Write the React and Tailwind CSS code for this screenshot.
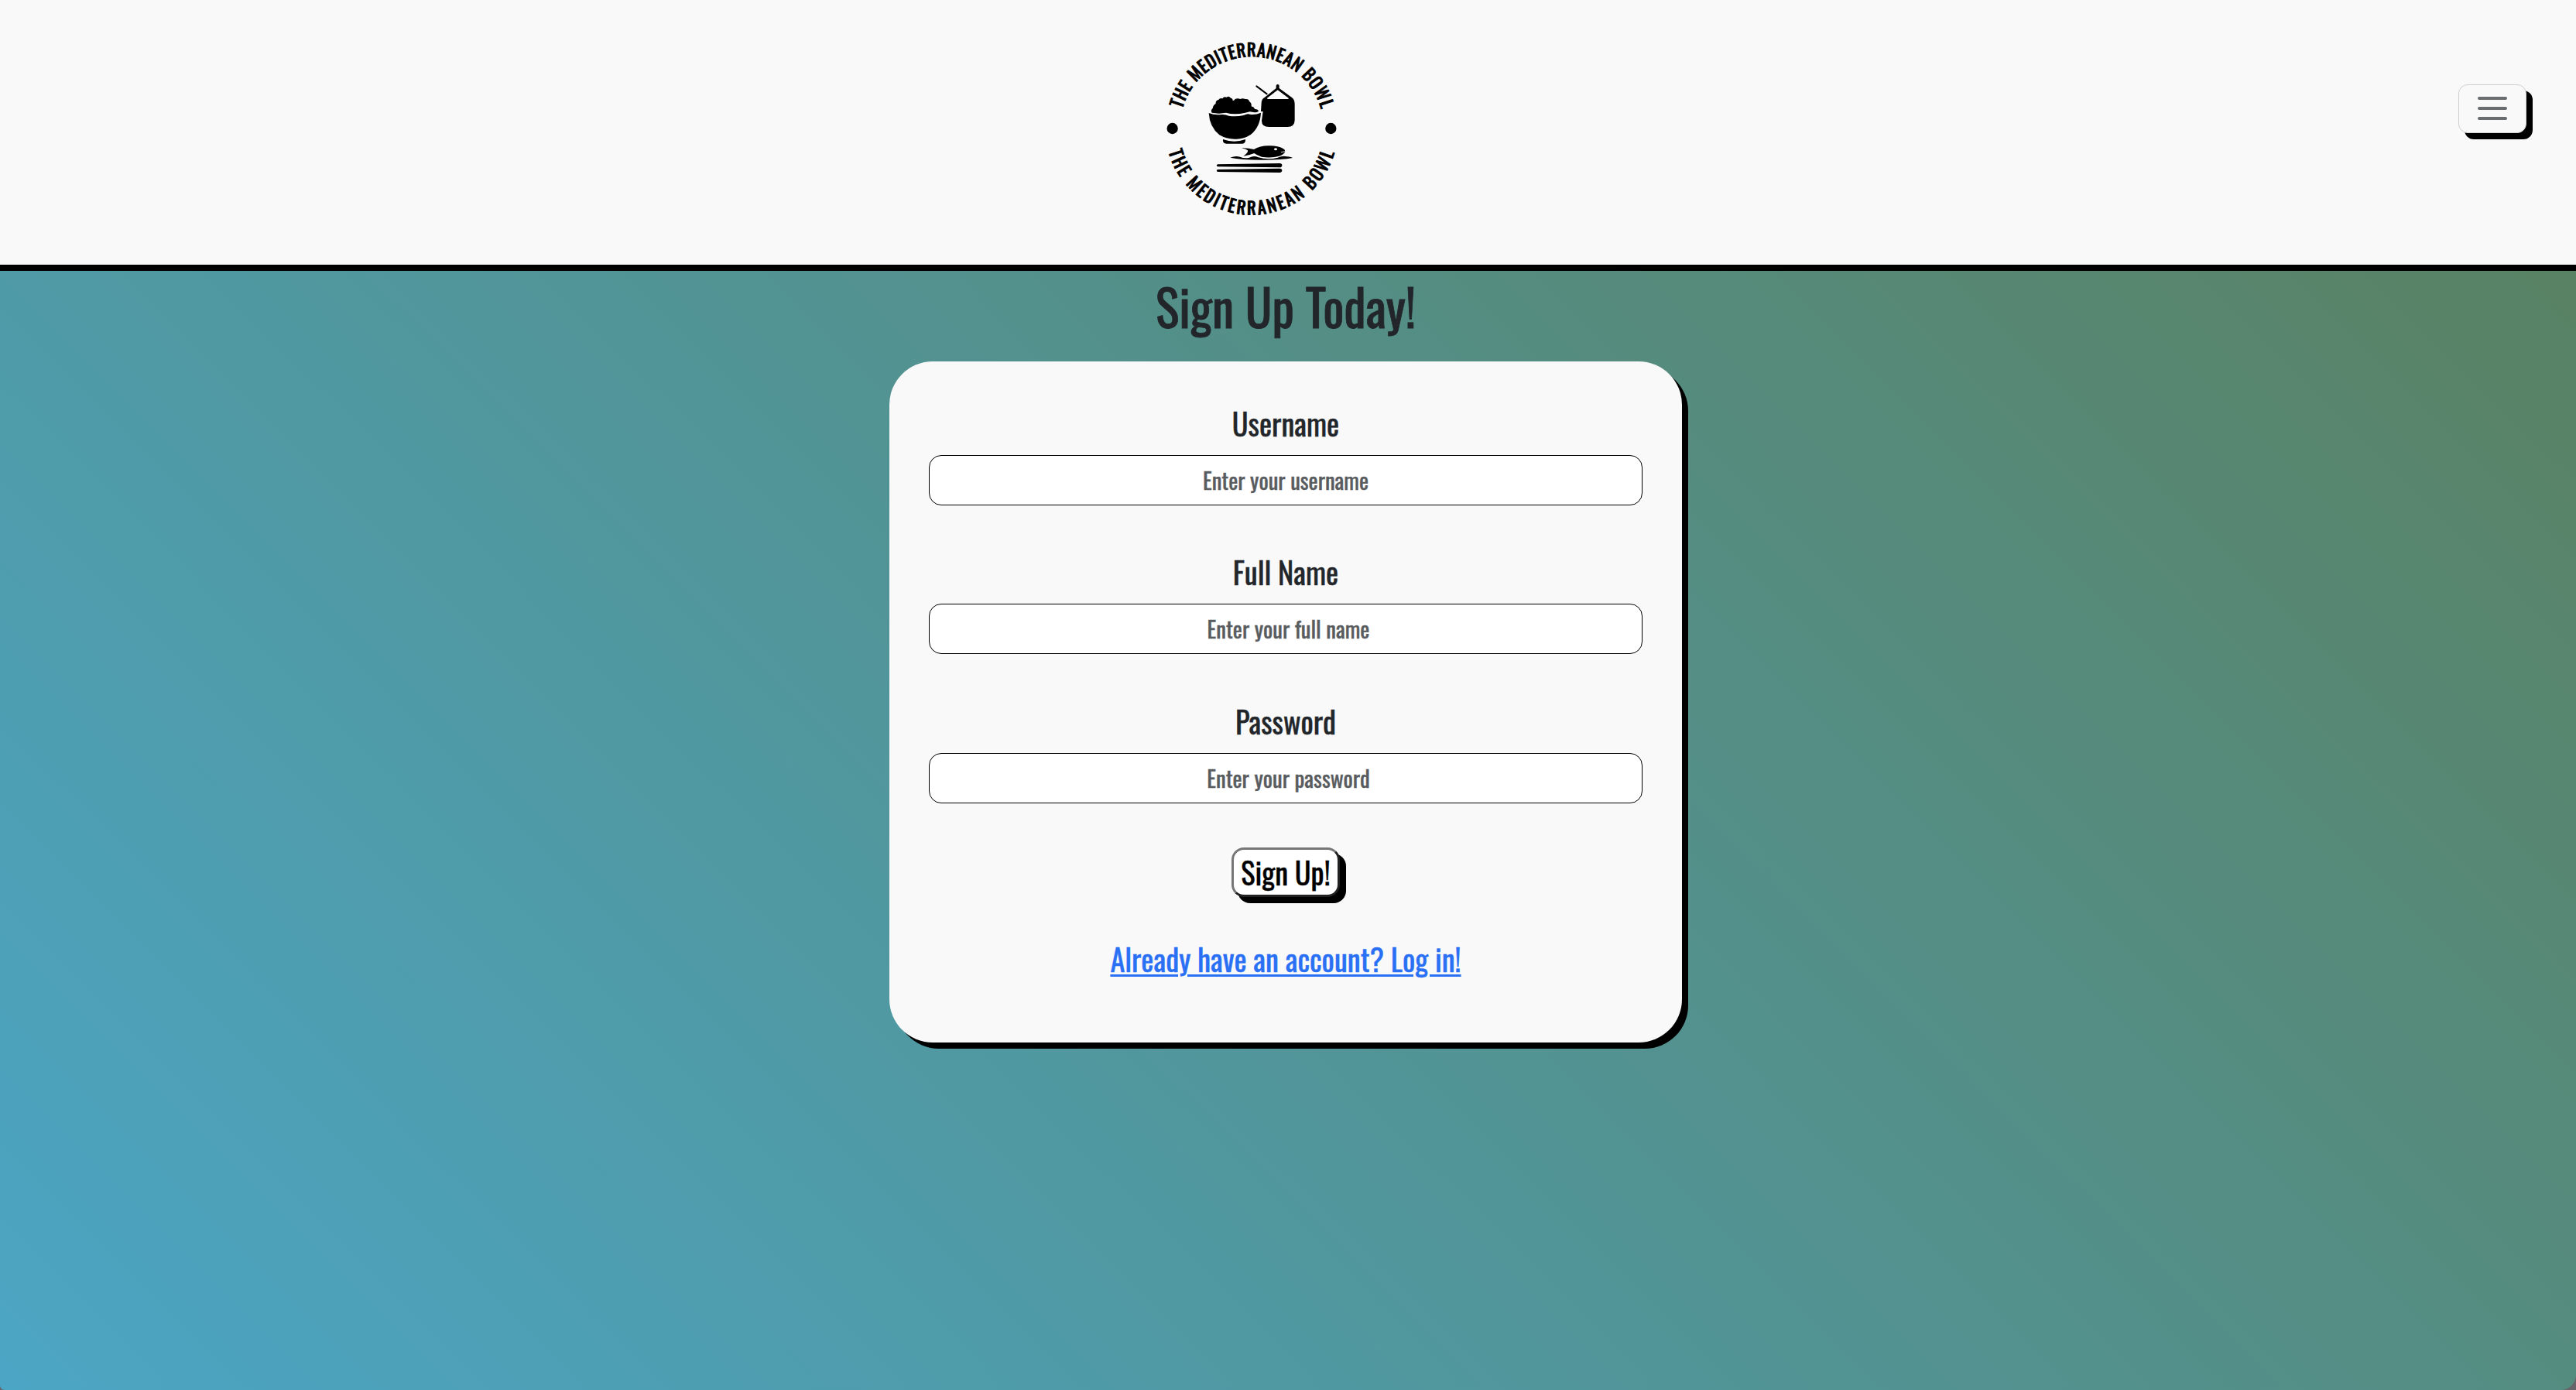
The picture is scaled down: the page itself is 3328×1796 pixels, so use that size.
const fields = [
  { label: "Username", placeholder: "Enter your username", offset: "" },
  { label: "Full Name", placeholder: "Enter your full name", offset: "pl-[7px]" },
  { label: "Password", placeholder: "Enter your password", offset: "pl-[7px]" },
];

function Logo() {
  return (
    <svg viewBox="0 0 840 810" className="h-[270px] w-[280px]" fill="#000" role="img">
      <defs>
        <path id="arc-top" d="M142.5 332.4A279 279 0 0 1 680.8 337.3" />
        <path id="arc-bottom" d="M88.5 498.6A335 335 0 0 0 735 493" />
      </defs>
      <g
        fontFamily='Oswald, "Roboto Condensed", sans-serif'
        fontWeight="400"
        fontSize="67"
        stroke="#000"
        strokeWidth="3"
      >
        <text textLength="724" lengthAdjust="spacing">
          <textPath href="#arc-top">THE MEDITERRANEAN BOWL</textPath>
        </text>
        <text textLength="864" lengthAdjust="spacing">
          <textPath href="#arc-bottom">THE MEDITERRANEAN BOWL</textPath>
        </text>
      </g>
      <circle cx="104" cy="408" r="21.5" />
      <circle cx="718" cy="408" r="21.5" />
      {/* jar with spoon */}
      <path d="M449 310Q449 294 462 287L506 252V242Q506 237 512 237Q518 237 518 242V252L566 287Q578 295 578 312V376Q578 402 550 402H478Q450 402 450 378L455 342H447Z" />
      <path d="M512 259L471 290Q470 294 476 294H552Q557 293 552 289Z" fill="#f9f9f9" />
      <path d="M430 244L470 274" stroke="#000" strokeWidth="6" strokeLinecap="round" />
      {/* rice */}
      <path d="M257 347Q251 338 260 330Q262 317 272 311Q271 299 283 297Q287 289 298 292Q303 283 314 287Q323 281 330 290Q338 291 338 300Q343 301 347 294Q357 289 367 294Q376 289 386 294Q400 292 402 303Q412 310 410 322Q420 324 424 333Q436 334 438 341Q430 347 418 345L404 343L386 347Q345 356 312 347L284 350Z" />
      {/* bowl */}
      <path d="M245 348Q264 356 285 355Q308 352 322 359Q350 363 380 357Q396 349 404 353Q424 357 447 347Q444 403 406 433Q378 451 346 449Q312 449 286 433Q248 402 245 348Z" />
      <path d="M300 450Q344 466 387 450V456Q385 467 374 467H313Q302 467 300 457Z" />
      {/* fish */}
      <path d="M372 484Q396 483 420 489Q442 475 477 475Q512 474 533 486Q541 490 541 497Q538 508 518 515Q486 524 450 518Q432 512 421 504Q402 512 379 515Q399 502 396 493Q388 487 372 484Z" />
      <ellipse cx="504" cy="488" rx="6" ry="4.5" fill="#f9f9f9" />
      <path d="M542 497L525 500" stroke="#f9f9f9" strokeWidth="2.5" />
      <path d="M328 521Q348 513 366 518Q384 526 402 521Q420 512 437 520Q475 531 512 521Q532 512 548 517Q566 519 570 522Q530 530 450 530Q370 530 328 521Z" />
      {/* chopsticks */}
      <path d="M279 547L520 543Q529 544 529 551Q529 558 520 559L279 556Q272 551 279 547Z" />
      <path d="M279 567L520 563Q529 564 529 571Q529 578 520 579L279 576Q272 571 279 567Z" />
    </svg>
  );
}

function MenuButton() {
  return (
    <button className="mt-[109px] flex h-[63px] w-[88px] flex-col items-center justify-center gap-[9px] rounded-[12px] border border-[#cfcfcf] bg-[#f9f9f9] pb-[2px] shadow-[8px_8px_0_#000]">
      <span className="h-1 w-[38px] rounded-full bg-[#696d6f]" />
      <span className="h-1 w-[38px] rounded-full bg-[#696d6f]" />
      <span className="h-1 w-[38px] rounded-full bg-[#696d6f]" />
    </button>
  );
}

export default function App() {
  return (
    <div className="h-[1796px] w-full bg-[#66666a] font-['Oswald','Roboto_Condensed',sans-serif] font-normal text-[#22262a] [-webkit-text-stroke:0.4px]">
      <div className="flex h-full flex-col overflow-hidden rounded-br-[20px] rounded-bl-[6px] bg-[linear-gradient(45deg,#4ba5c4,#5a7f5c)]">
        <header className="flex h-[350px] shrink-0 items-start justify-between border-b-8 border-black bg-[#f9f9f9] pr-[64px] pl-[1480px]">
          <div className="pt-[30px]">
            <Logo />
          </div>
          <MenuButton />
        </header>
        <main className="flex flex-col items-center pr-[6px]">
          <h1 className="h-[117px] text-[64px] leading-[91px] [-webkit-text-stroke:0.8px]">Sign Up Today!</h1>
          <form className="flex h-[880px] w-[1024px] flex-col items-center rounded-[56px] bg-[#f9f9f9] px-[51px] pt-[60px] shadow-[8px_8px_0_#000]">
            {fields.map((f) => (
              <div key={f.label} className="flex h-[192.4px] w-full flex-col items-center">
                <label className="mb-[21px] text-[38.4px] leading-[40px]">{f.label}</label>
                <div
                  className={`flex h-[64.8px] w-full items-center justify-center rounded-[16px] border border-black bg-white text-[28.8px] leading-none text-[#595c5f] ${f.offset}`}
                >
                  {f.placeholder}
                </div>
              </div>
            ))}
            <button
              type="button"
              className="mt-[-9.2px] h-16 w-[140px] shrink-0 rounded-[16px] border-3 border-t-[#767676] border-r-[#212121] border-b-[#212121] border-l-[#767676] bg-white text-[38.4px] leading-[57px] whitespace-nowrap text-black shadow-[8px_8px_0_#000]"
            >
              Sign Up!
            </button>
            <a className="mt-[60px] text-[38.4px] leading-[40px] text-[#2a70f5] underline decoration-[3px] underline-offset-[3px]">
              Already have an account? Log in!
            </a>
          </form>
        </main>
      </div>
    </div>
  );
}
